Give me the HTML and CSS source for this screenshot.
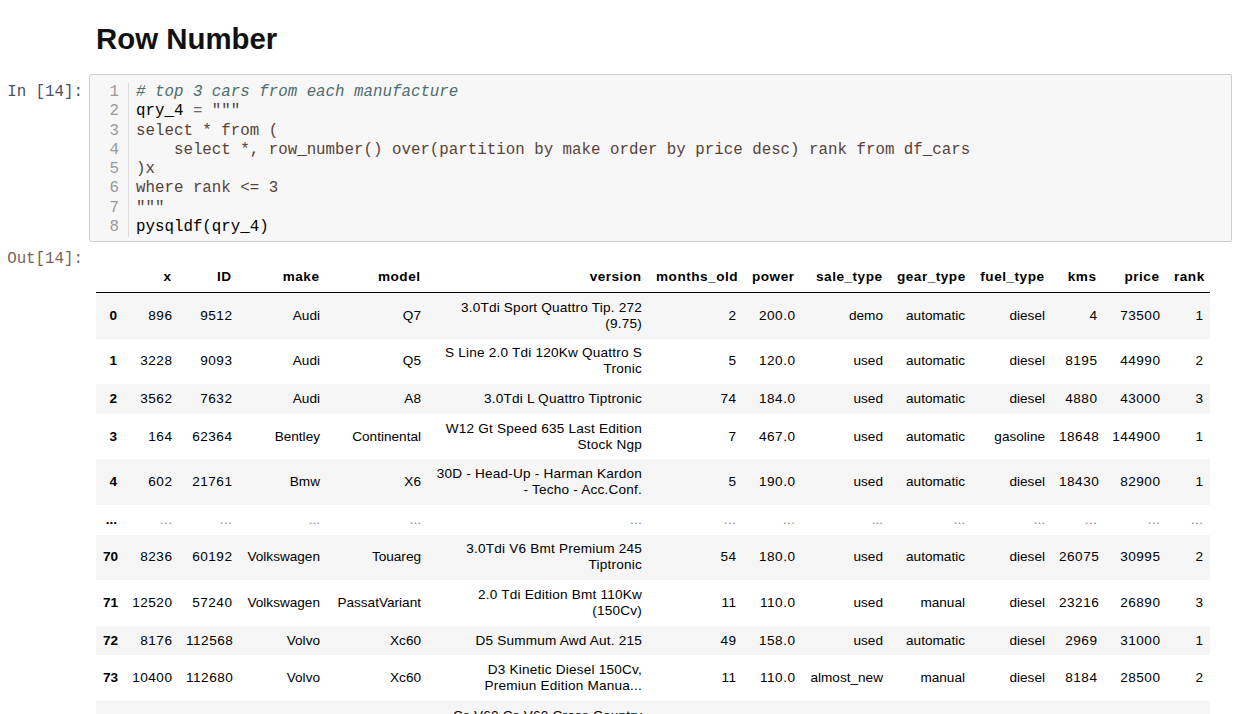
FILE: index.html
```html
<!DOCTYPE html>
<html>
<head>
<meta charset="utf-8">
<title>Row Number</title>
<link rel="stylesheet" href="styles.css">
</head>
<body>
<div class="notebook">
  <div class="cell md-cell">
    <div class="prompt"></div>
    <div class="md-area"><h2 class="title">Row Number</h2></div>
  </div>

  <div class="cell code-cell">
    <div class="prompt in-prompt">In&nbsp;[14]:</div>
    <div class="input-area">
      <div class="gutter">
        <div>1</div><div>2</div><div>3</div><div>4</div><div>5</div><div>6</div><div>7</div><div>8</div>
      </div>
      <pre class="code"><span class="c-com"># top 3 cars from each manufacture</span>
<span class="c-var">qry_4</span> <span class="c-op">=</span> <span class="c-str">"""</span>
<span class="c-str">select * from (</span>
<span class="c-str">    select *, row_number() over(partition by make order by price desc) rank from df_cars</span>
<span class="c-str">)x</span>
<span class="c-str">where rank &lt;= 3</span>
<span class="c-str">"""</span>
<span class="c-var">pysqldf(qry_4)</span></pre>
    </div>
  </div>

  <div class="cell out-cell">
    <div class="prompt out-prompt">Out[14]:</div>
    <div class="output-area">
      <table class="dataframe">
        <colgroup>
          <col class="w-idx"><col class="w-x"><col class="w-id"><col class="w-make"><col class="w-model"><col class="w-version"><col class="w-months"><col class="w-power"><col class="w-sale"><col class="w-gear"><col class="w-fuel"><col class="w-kms"><col class="w-price"><col class="w-rank">
        </colgroup>
        <thead>
          <tr><th></th><th>x</th><th>ID</th><th>make</th><th>model</th><th>version</th><th>months_old</th><th>power</th><th>sale_type</th><th>gear_type</th><th>fuel_type</th><th>kms</th><th>price</th><th>rank</th></tr>
        </thead>
        <tbody>
          <tr><th>0</th><td>896</td><td>9512</td><td>Audi</td><td>Q7</td><td>3.0Tdi Sport Quattro Tip. 272 (9.75)</td><td>2</td><td>200.0</td><td>demo</td><td>automatic</td><td>diesel</td><td>4</td><td>73500</td><td>1</td></tr>
          <tr><th>1</th><td>3228</td><td>9093</td><td>Audi</td><td>Q5</td><td>S Line 2.0 Tdi 120Kw Quattro S Tronic</td><td>5</td><td>120.0</td><td>used</td><td>automatic</td><td>diesel</td><td>8195</td><td>44990</td><td>2</td></tr>
          <tr><th>2</th><td>3562</td><td>7632</td><td>Audi</td><td>A8</td><td>3.0Tdi L Quattro Tiptronic</td><td>74</td><td>184.0</td><td>used</td><td>automatic</td><td>diesel</td><td>4880</td><td>43000</td><td>3</td></tr>
          <tr><th>3</th><td>164</td><td>62364</td><td>Bentley</td><td>Continental</td><td>W12 Gt Speed 635 Last Edition Stock Ngp</td><td>7</td><td>467.0</td><td>used</td><td>automatic</td><td>gasoline</td><td>18648</td><td>144900</td><td>1</td></tr>
          <tr><th>4</th><td>602</td><td>21761</td><td>Bmw</td><td>X6</td><td>30D - Head-Up - Harman Kardon - Techo - Acc.Conf.</td><td>5</td><td>190.0</td><td>used</td><td>automatic</td><td>diesel</td><td>18430</td><td>82900</td><td>1</td></tr>
          <tr class="ell-row"><th>...</th><td>...</td><td>...</td><td>...</td><td>...</td><td>...</td><td>...</td><td>...</td><td>...</td><td>...</td><td>...</td><td>...</td><td>...</td><td>...</td></tr>
          <tr><th>70</th><td>8236</td><td>60192</td><td>Volkswagen</td><td>Touareg</td><td>3.0Tdi V6 Bmt Premium 245 Tiptronic</td><td>54</td><td>180.0</td><td>used</td><td>automatic</td><td>diesel</td><td>26075</td><td>30995</td><td>2</td></tr>
          <tr><th>71</th><td>12520</td><td>57240</td><td>Volkswagen</td><td>PassatVariant</td><td>2.0 Tdi Edition Bmt 110Kw (150Cv)</td><td>11</td><td>110.0</td><td>used</td><td>manual</td><td>diesel</td><td>23216</td><td>26890</td><td>3</td></tr>
          <tr><th>72</th><td>8176</td><td>112568</td><td>Volvo</td><td>Xc60</td><td>D5 Summum Awd Aut. 215</td><td>49</td><td>158.0</td><td>used</td><td>automatic</td><td>diesel</td><td>2969</td><td>31000</td><td>1</td></tr>
          <tr><th>73</th><td>10400</td><td>112680</td><td>Volvo</td><td>Xc60</td><td>D3 Kinetic Diesel 150Cv, Premiun Edition Manua...</td><td>11</td><td>110.0</td><td>almost_new</td><td>manual</td><td>diesel</td><td>8184</td><td>28500</td><td>2</td></tr>
          <tr><th>74</th><td>11235</td><td>114060</td><td>Volvo</td><td>V60</td><td>Cs V60 Cs V60 Cross Country D4 Momentum</td><td>9</td><td>140.0</td><td>used</td><td>automatic</td><td>diesel</td><td>12500</td><td>27900</td><td>3</td></tr>
        </tbody>
      </table>
    </div>
  </div>
</div>
</body>
</html>
```

FILE: styles.css
```css
html, body {
  margin: 0;
  padding: 0;
  background: #ffffff;
}

.notebook {
  width: 1244px;
  box-sizing: border-box;
  padding: 22px 12px 0 0;
  font-family: "Liberation Sans", Arial, sans-serif;
  color: #000;
}

.cell {
  display: flex;
  align-items: flex-start;
  gap: 6px;
}

.prompt {
  flex: 0 0 83px;
  width: 83px;
  text-align: right;
  font-family: "Liberation Mono", "Courier New", monospace;
  font-size: 15.8px;
  line-height: 19.3px;
  white-space: nowrap;
}

.md-area {
  flex: 1;
  padding-left: 7px;
}

.title {
  margin: 0;
  font-family: "Liberation Sans", Arial, sans-serif;
  font-weight: bold;
  font-size: 29.4px;
  line-height: 34px;
  color: #111;
}

.code-cell {
  margin-top: 18px;
}

.in-prompt {
  padding-top: 9px;
  color: #4c5062;
}

.input-area {
  flex: 1;
  display: flex;
  background: #f7f7f7;
  border: 1px solid #cfcfcf;
  border-radius: 2px;
  padding: 8px 0 3.5px 0;
}

.gutter {
  flex: 0 0 auto;
  width: 29px;
  padding-right: 9px;
  border-right: 1px solid #dddddd;
  text-align: right;
  font-family: "Liberation Mono", "Courier New", monospace;
  font-size: 15.8px;
  line-height: 19.3px;
  color: #9a9a9a;
}

.code {
  margin: 0;
  padding-left: 7px;
  font-family: "Liberation Mono", "Courier New", monospace;
  font-size: 15.8px;
  line-height: 19.3px;
  color: #000;
  white-space: pre;
}

.c-com {
  font-style: italic;
  color: #4d6c6c;
}

.c-var {
  color: #000;
}

.c-op {
  color: #6f6a70;
}

.c-str {
  color: #56433b;
}

.out-cell {
  margin-top: 8.5px;
}

.out-prompt {
  color: #7a6257;
}

.output-area {
  flex: 1;
  padding-left: 7px;
  padding-top: 12px;
}

.dataframe {
  width: 1114px;
  table-layout: fixed;
  border-collapse: collapse;
  border-spacing: 0;
  font-family: "Liberation Sans", Arial, sans-serif;
  font-size: 13.6px;
  line-height: 16px;
  color: #000;
}

.dataframe th,
.dataframe td {
  padding: 6.8px 7px;
  text-align: right;
  vertical-align: middle;
}

.dataframe th {
  font-weight: bold;
}

.dataframe thead th {
  border-bottom: 1px solid #000;
  letter-spacing: 0.5px;
  padding-right: 7.5px;
}

.dataframe tbody tr:nth-child(odd) {
  background: #f5f5f5;
}

/* numeric columns: x, ID, months_old, power, kms, price, rank */
.dataframe td:nth-child(2),
.dataframe td:nth-child(3),
.dataframe td:nth-child(7),
.dataframe td:nth-child(8),
.dataframe td:nth-child(12),
.dataframe td:nth-child(13),
.dataframe td:nth-child(14) {
  letter-spacing: 0.5px;
  padding-right: 6.5px;
}

/* version column */
.dataframe td:nth-child(6) {
  letter-spacing: 0.2px;
}

.ell-row td {
  color: #8a8a8a;
}

.w-idx { width: 28px; }
.w-x { width: 55px; }
.w-id { width: 60px; }
.w-make { width: 88px; }
.w-model { width: 101px; }
.w-version { width: 221px; }
.w-months { width: 94px; }
.w-power { width: 59px; }
.w-sale { width: 88px; }
.w-gear { width: 82px; }
.w-fuel { width: 80px; }
.w-kms { width: 52px; }
.w-price { width: 63px; }
.w-rank { width: 43px; }
```
